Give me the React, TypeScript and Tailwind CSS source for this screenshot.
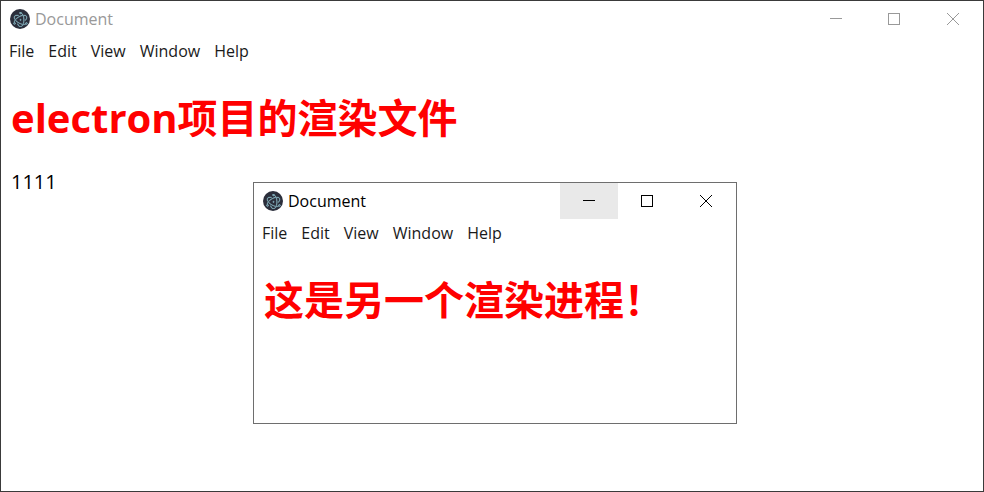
import React from 'react';
import { SiElectron } from 'react-icons/si';

const MENU_ITEMS = ['File', 'Edit', 'View', 'Window', 'Help'];

interface AppWindowProps {
  active?: boolean;
  className: string;
  children: React.ReactNode;
}

const AppWindow: React.FC<AppWindowProps> = ({ active = false, className, children }) => {
  return (
    <section className={`flex flex-col border bg-white ${className}`}>
      <header className="flex h-9 items-center justify-between">
        <div className="flex items-center gap-[5px] pl-[9px]">
          <span className="flex size-5 items-center justify-center rounded-full bg-[#2b2e3b] text-[#8fbecb]">
            <SiElectron size={15} stroke="currentColor" strokeWidth={0.7} />
          </span>
          <span className={active ? 'text-base text-black' : 'text-base text-[#999999]'}>Document</span>
        </div>

        <div className={active ? 'flex self-stretch text-black' : 'flex self-stretch text-[#999999]'}>
          <button
            aria-label="Minimize"
            className={`flex w-[58px] items-center justify-center ${active ? 'bg-[#e9e9e9]' : ''}`}
          >
            <svg width="12" height="12" viewBox="0 0 12 12" stroke="currentColor" shapeRendering="crispEdges">
              <path d="M0 5.5h12" />
            </svg>
          </button>
          <button aria-label="Maximize" className="flex w-[58px] items-center justify-center">
            <svg width="12" height="12" viewBox="0 0 12 12" fill="none" stroke="currentColor" shapeRendering="crispEdges">
              <path d="M.5.5h11v11H.5z" />
            </svg>
          </button>
          <button aria-label="Close" className="flex w-[60px] items-center justify-center">
            <svg width="12" height="12" viewBox="0 0 12 12" stroke="currentColor">
              <path d="M0 0l12 12M12 0L0 12" />
            </svg>
          </button>
        </div>
      </header>

      <nav className="flex h-7 items-center gap-3.5 px-2 text-base text-[#1a1a1a]">
        {MENU_ITEMS.map((item) => (
          <button key={item}>{item}</button>
        ))}
      </nav>

      <div className="px-2.5 pt-[25px]">{children}</div>
    </section>
  );
};

const App: React.FC = () => {
  return (
    <main className="relative flex min-h-screen flex-col font-['Open_Sans','Noto_Sans_CJK_SC',sans-serif]">
      <AppWindow className="flex-1 border-[#3a3a3a]">
        <h1 className="text-[40px] leading-14 font-bold text-[#ff0000]">electron项目的渲染文件</h1>
        <p className="mt-[22px] text-xl text-black">1111</p>
      </AppWindow>

      {/* second renderer window, floats over the first */}
      <AppWindow active className="absolute top-[182px] left-[253px] h-[242px] w-[484px] border-[#6e6e6e]">
        <h1 className="text-[40px] leading-14 font-bold text-[#ff0000]">这是另一个渲染进程！</h1>
      </AppWindow>
    </main>
  );
};

export default App;
